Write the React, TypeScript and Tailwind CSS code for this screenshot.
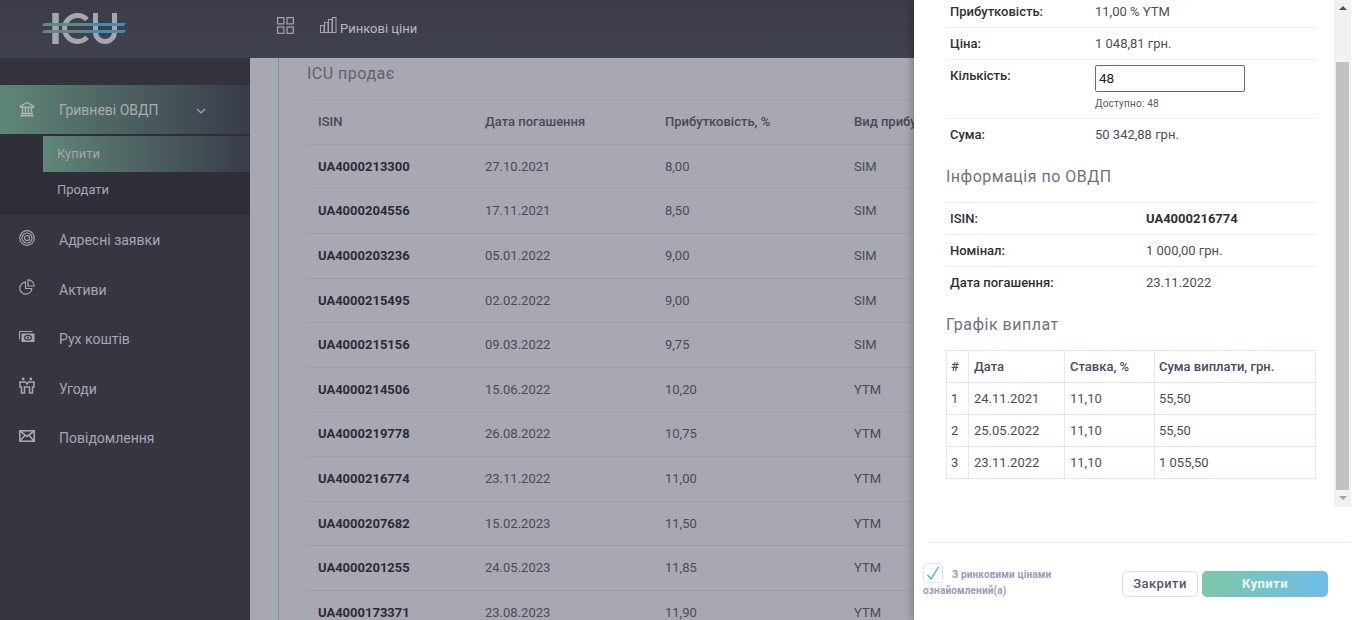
import { ReactNode } from "react";

const BONDS = [
  ["UA4000213300", "27.10.2021", "8,00", "SIM"],
  ["UA4000204556", "17.11.2021", "8,50", "SIM"],
  ["UA4000203236", "05.01.2022", "9,00", "SIM"],
  ["UA4000215495", "02.02.2022", "9,00", "SIM"],
  ["UA4000215156", "09.03.2022", "9,75", "SIM"],
  ["UA4000214506", "15.06.2022", "10,20", "YTM"],
  ["UA4000219778", "26.08.2022", "10,75", "YTM"],
  ["UA4000216774", "23.11.2022", "11,00", "YTM"],
  ["UA4000207682", "15.02.2023", "11,50", "YTM"],
  ["UA4000201255", "24.05.2023", "11,85", "YTM"],
  ["UA4000173371", "23.08.2023", "11,90", "YTM"],
];

const PAYMENTS = [
  ["1", "24.11.2021", "11,10", "55,50"],
  ["2", "25.05.2022", "11,10", "55,50"],
  ["3", "23.11.2022", "11,10", "1 055,50"],
];

function Logo() {
  return (
    <svg width="84" height="32" viewBox="0 0 84 32" className="mt-[13px] ml-[42px]" fill="none">
      <defs>
        <linearGradient id="logoLine" x1="0" x2="1" y1="0" y2="0">
          <stop offset="0.4" stopColor="#5f8b7d" />
          <stop offset="0.62" stopColor="#3f8fae" />
        </linearGradient>
      </defs>
      <path d="M13.500 0v31" stroke="#a5a6af" strokeWidth="6.500" />
      <path d="M45 6.600A13 13 0 1 0 45 24.400" stroke="#a5a6af" strokeWidth="5" />
      <path d="M53.500 0v19a9.500 9.500 0 0 0 19 0V0" stroke="#a5a6af" strokeWidth="5" />
      <path d="M2 10h82l-2 3H0zM2 17h82l-2 3H0z" fill="url(#logoLine)" />
    </svg>
  );
}

function IconBank() {
  return (
    <svg width="16" height="16" viewBox="0 0 16 16" fill="none" stroke="#b0b2b8" strokeWidth="1.400">
      <path d="M1.500 5.200 8 1.500l6.500 3.700v1h-13zM3.500 7v5M6.500 7v5M9.500 7v5M12.500 7v5M2 12.700h12M1 14.800h14" />
    </svg>
  );
}

function IconTarget() {
  return (
    <svg width="16" height="16" viewBox="0 0 16 16" fill="none" stroke="#a5a6af" strokeWidth="1.200">
      <circle cx="8" cy="8" r="7.300" />
      <circle cx="8" cy="8" r="5" />
      <circle cx="8" cy="8" r="2.500" />
    </svg>
  );
}

function IconPie() {
  return (
    <svg width="16" height="16" viewBox="0 0 16 16" fill="none" stroke="#a5a6af" strokeWidth="1.200">
      <path d="M6.500 3.200a6 6 0 1 0 6.300 6.300H6.500z" />
      <path d="M9 .8a6.200 6.200 0 0 1 6.200 6.200H9z" />
    </svg>
  );
}

function IconMoney() {
  return (
    <svg width="16" height="16" viewBox="0 0 16 16" fill="none" stroke="#a5a6af">
      <path d="M.5 2.500h13M.5 2.500v8" strokeWidth="1.200" />
      <rect x="2.500" y="4.500" width="13" height="8.500" fill="#a5a6af" stroke="none" />
      <ellipse cx="9" cy="8.700" rx="3.400" ry="2.300" stroke="#363641" strokeWidth="1.100" />
      <circle cx="9" cy="8.700" r="1" fill="#363641" stroke="none" />
    </svg>
  );
}

function IconPeople() {
  return (
    <svg width="16" height="18" viewBox="0 0 16 18" fill="none" stroke="#a5a6af" strokeWidth="1.500">
      <circle cx="4.200" cy="2" r="1.400" fill="#a5a6af" stroke="none" />
      <circle cx="11.800" cy="2" r="1.400" fill="#a5a6af" stroke="none" />
      <path d="M1 5h5.500L8 7l1.500-2H15v5h-1.500v6h-3v-6h-5v6h-3v-6H1z" />
    </svg>
  );
}

function IconMail() {
  return (
    <svg width="16" height="12" viewBox="0 0 16 12" fill="none" stroke="#a5a6af" strokeWidth="1.600">
      <rect x=".8" y=".8" width="14.400" height="10.400" />
      <path d="M1 1l7 5.500L15 1M1 11l5-5.800M15 11l-5-5.800" />
    </svg>
  );
}

function IconGrid() {
  return (
    <svg width="17" height="17" viewBox="0 0 17 17" fill="none" stroke="#a5a6af" strokeWidth="1.200">
      <rect x=".6" y=".6" width="6.300" height="6.300" />
      <rect x="10" y=".6" width="6.300" height="6.300" />
      <rect x=".6" y="10" width="6.300" height="6.300" />
      <rect x="10" y="10" width="6.300" height="6.300" />
    </svg>
  );
}

function IconBars() {
  return (
    <svg width="17" height="16" viewBox="0 0 17 16" fill="none" stroke="#a5a6af" strokeWidth="1">
      <rect x=".5" y="8.500" width="3.500" height="7" />
      <rect x="4.500" y="5.500" width="3.500" height="10" />
      <rect x="8.500" y="2.500" width="3.500" height="13" />
      <rect x="12.500" y=".5" width="3.500" height="15" />
    </svg>
  );
}

function NavItem({ icon, label }: { icon: ReactNode; label: string }) {
  return (
    <div className="flex h-[49.5px] items-center pl-[19px]">
      <span className="flex w-[40px] -translate-y-[2px]">{icon}</span>
      <span className="mt-[2px] text-[14px] text-[#a5a6af]">{label}</span>
    </div>
  );
}

function Row({ label, children }: { label: string; children: ReactNode }) {
  return (
    <div className="flex h-[32px] items-center border-b border-[#e9edf4] pl-1">
      <span className="w-[145px] font-medium text-[#2f3037]">{label}</span>
      {children}
    </div>
  );
}

function InfoRow({ label, children, last }: { label: string; children: ReactNode; last?: boolean }) {
  return (
    <div className={`flex h-[32px] items-center pl-1 ${last ? "" : "border-b border-[#e9edf4]"}`}>
      <span className="w-[196px] font-medium text-[#2f3037]">{label}</span>
      {children}
    </div>
  );
}

function Drawer() {
  return (
    <aside className="absolute inset-y-0 left-[914px] flex w-[445px] flex-col bg-white text-[13px] text-[#4d4e57] shadow-[-3px_0_7px_rgba(0,0,0,0.22)]">
      <div className="flex h-[507px] shrink-0 overflow-hidden">
        <div className="w-[420px] shrink-0 pl-[32px] pr-[18px]">
          <div className="-mt-[4px]">
            <Row label="Прибутковість:">11,00 % YTM</Row>
            <Row label="Ціна:">1 048,81 грн.</Row>
            <div className="flex h-[59px] border-b border-[#e9edf4] pt-[5px] pl-1">
              <span className="mt-[1px] w-[145px] font-medium text-[#2f3037]">Кількість:</span>
              <div>
                <div className="flex h-[27px] w-[150px] items-center rounded-[2px] border border-[#6c6c6c] pl-[3px] text-[13.500px] text-[#222]">48</div>
                <div className="mt-[4px] text-[10px] tracking-[0.2px] text-[#55565f]">Доступно: 48</div>
              </div>
            </div>
            <div className="flex h-[32px] items-center pl-1">
              <span className="w-[145px] font-medium text-[#2f3037]">Сума:</span>
              50 342,88 грн.
            </div>
          </div>
          <h3 className="mt-[14px] h-[37px] text-[16px] leading-[24px] tracking-[0.5px] text-[#70717f]">Інформація по ОВДП</h3>
          <div className="border-t border-[#e9edf4]">
            <InfoRow label="ISIN:"><b className="font-bold text-[#2f3037]">UA4000216774</b></InfoRow>
            <InfoRow label="Номінал:">1 000,00 грн.</InfoRow>
            <InfoRow label="Дата погашення:" last>23.11.2022</InfoRow>
          </div>
          <h3 className="mt-[14px] h-[37px] text-[16px] leading-[24px] tracking-[0.5px] text-[#70717f]">Графік виплат</h3>
          <table className="w-[370px] table-fixed border-collapse">
            <thead>
              <tr className="h-[32px] text-left font-medium text-[#4b4c60]">
                <th className="w-[22px] border border-[#e2e8f3] pl-[4px] font-medium">#</th>
                <th className="w-[96px] border border-[#e2e8f3] pl-[5px] font-medium">Дата</th>
                <th className="w-[90px] border border-[#e2e8f3] pl-[5px] font-medium">Ставка, %</th>
                <th className="border border-[#e2e8f3] pl-[4px] font-medium">Сума виплати, грн.</th>
              </tr>
            </thead>
            <tbody>
              {PAYMENTS.map((p) => (
                <tr key={p[0]} className="h-[32px]">
                  <td className="border border-[#e2e8f3] pl-[4px]">{p[0]}</td>
                  <td className="border border-[#e2e8f3] pl-[5px]">{p[1]}</td>
                  <td className="border border-[#e2e8f3] pl-[5px]">{p[2]}</td>
                  <td className="border border-[#e2e8f3] pl-[4px]">{p[3]}</td>
                </tr>
              ))}
            </tbody>
          </table>
        </div>
        <div className="flex w-[17px] shrink-0 flex-col items-center bg-[#f1f1f1]">
          <div className="mt-[6px] h-0 w-0 border-x-[4px] border-b-[4px] border-x-transparent border-b-[#505050]" />
          <div className="mt-[52px] h-[428px] w-[13px] bg-[#c1c1c1]" />
          <div className="mt-[6px] h-0 w-0 border-x-[4px] border-t-[4px] border-x-transparent border-t-[#a3a3a3]" />
        </div>
      </div>
      <div className="mt-[35px] ml-[14px] w-[423px] border-t border-[#e6ecf4]" />
      <div className="flex items-start">
        <p className="mt-[20px] ml-[9px] w-[190px] text-[10px] leading-[15px] font-bold tracking-[0.15px] text-[#9a9bb8]">
          <span className="mr-[9px] inline-flex h-[20px] w-[20px] items-center justify-center rounded-[3px] border border-[#dfe6f2] align-[-3px]">
            <svg width="14" height="15" viewBox="0 0 14 15" fill="none" stroke="#35a7ee" strokeWidth="1.300">
              <path d="M1.500 9l3.500 4L12.500 1" />
            </svg>
          </span>
          З ринковими цінами ознайомлений(а)
        </p>
        <div className="mt-[28px] ml-[9px] flex gap-[4px]">
          <button className="h-[26px] w-[76px] rounded-[5px] border border-[#d5deef] bg-white pb-[1px] text-[13px] font-medium tracking-[0.4px] text-[#55566b]">Закрити</button>
          <button className="h-[26px] w-[126px] rounded-[5px] bg-gradient-to-r from-[#7cc7a6] to-[#6fbce9] pb-[1px] text-[13px] font-bold tracking-[0.4px] text-[#eef7f6]">Купити</button>
        </div>
      </div>
    </aside>
  );
}

export default function App() {
  return (
    <div className="relative h-[620px] w-[1359px] overflow-hidden bg-[#a8a8b2] font-[family-name:Roboto,sans-serif]">
      <header className="flex h-[58px] bg-gradient-to-b from-[#3b3c48] to-[#41424f]">
        <div className="w-[277px] shrink-0"><Logo /></div>
        <div className="flex items-start pt-[17px]">
          <IconGrid />
          <span className="ml-[26px] flex items-start text-[#b8b9c0]">
            <IconBars />
            <span className="mt-[4px] ml-[3px] text-[13px] leading-[16px]">Ринкові ціни</span>
          </span>
        </div>
      </header>
      <div className="flex h-[562px]">
        <nav className="w-[250px] shrink-0 bg-[#363641]">
          <div className="h-[27px] bg-[#33333e]" />
          <div className="flex h-[49px] items-center bg-gradient-to-r from-[#5f8778] to-[#393c49] pl-[19px]">
            <span className="flex w-[40px] -translate-y-[1px]"><IconBank /></span>
            <span className="mt-[2px] w-[137px] text-[14px] text-[#a9aeb2]">Гривневі ОВДП</span>
            <svg width="10" height="6" viewBox="0 0 10 6" fill="none" stroke="#a5a6af" strokeWidth="1.200" className="mt-[3px]">
              <path d="M1 1l4 4 4-4" />
            </svg>
          </div>
          <div className="h-[81px] bg-[#2f2f3a] pt-[2px] text-[13px] text-[#a5a6af]">
            <div className="ml-[43px] flex h-[36px] items-center bg-gradient-to-r from-[#5f8778] to-[#393c49] pl-[14px]">Купити</div>
            <div className="flex h-[36px] items-center pl-[57px]">Продати</div>
          </div>
          <NavItem icon={<IconTarget />} label="Адресні заявки" />
          <NavItem icon={<IconPie />} label="Активи" />
          <NavItem icon={<IconMoney />} label="Рух коштів" />
          <NavItem icon={<IconPeople />} label="Угоди" />
          <NavItem icon={<IconMail />} label="Повідомлення" />
        </nav>
        <main className="ml-[28px] flex-1 border-l border-[#6d9c90] pl-[28px] text-[13px]">
          <h2 className="mt-[6px] h-[36px] text-[16px] leading-[20px] tracking-[0.5px] text-[#5f606e]">ICU продає</h2>
          <div className="grid h-[44.800px] grid-cols-[167px_180px_189px_1fr] items-center border-y border-[#9c9fae] pb-[2px] pl-[11px] font-medium text-[#484955]">
            <span>ISIN</span>
            <span>Дата погашення</span>
            <span>Прибутковість, %</span>
            <span>Вид прибутковості</span>
          </div>
          {BONDS.map((b) => (
            <div key={b[0]} className="grid h-[44.600px] grid-cols-[167px_180px_189px_1fr] items-center border-b border-[#9c9fae] pl-[11px] text-[#4a4b54]">
              <span className="font-bold text-[#2c2d33]">{b[0]}</span>
              <span>{b[1]}</span>
              <span>{b[2]}</span>
              <span>{b[3]}</span>
            </div>
          ))}
        </main>
      </div>
      <Drawer />
    </div>
  );
}
